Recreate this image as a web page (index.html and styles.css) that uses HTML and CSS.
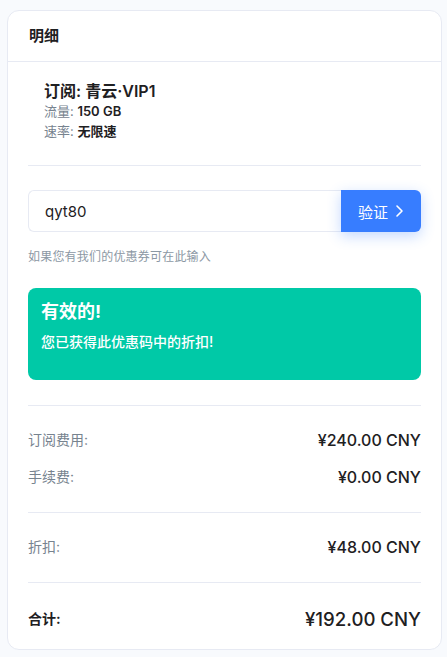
FILE: index.html
```html
<!DOCTYPE html>
<html lang="zh-CN">

<head>
    <meta charset="UTF-8">
    <meta name="viewport" content="width=device-width, initial-scale=1.0">
    <title>明细</title>
    <link rel="stylesheet" href="styles.css">
</head>

<body>

<div class="card">
    <div class="card-header">
        <h4>明细</h4>
    </div>

    <div class="card-body">
        <div class="plan">
            <h5>订阅: 青云·VIP1</h5>
            <div class="plan-line"><span class="muted">流量:</span> <b>150 GB</b></div>
            <div class="plan-line"><span class="muted">速率:</span> <b>无限速</b></div>
        </div>

        <div class="coupon">
            <div class="input-group">
                <input type="text" id="coupon" value="qyt80">
                <button type="button">验证
                    <svg width="10" height="14" viewBox="0 0 10 14"><path d="M3 2l5 5-5 5" fill="none" stroke="#fff" stroke-width="1.6" stroke-linecap="round" stroke-linejoin="round"/></svg>
                </button>
            </div>
            <p class="hint">如果您有我们的优惠券可在此输入</p>

            <div class="alert">
                <h4>有效的!</h4>
                <p>您已获得此优惠码中的折扣!</p>
            </div>
        </div>

        <div class="rows">
            <div class="row"><span class="muted">订阅费用:</span><span class="amount">¥240.00 CNY</span></div>
            <div class="row"><span class="muted">手续费:</span><span class="amount">¥0.00 CNY</span></div>
        </div>

        <div class="rows">
            <div class="row"><span class="muted">折扣:</span><span class="amount">¥48.00 CNY</span></div>
        </div>

        <div class="rows total">
            <div class="row"><span class="total-label">合计:</span><span class="total-amount">¥192.00 CNY</span></div>
        </div>
    </div>
</div>

</body>
</html>
```

FILE: styles.css
```css
body {
    font-family: Inter, "Noto Sans CJK SC", sans-serif;
    margin: 0;
    padding: 10px 5px 0 7px;
    background-color: #f8fafd;
    color: #1e2022;
}

.card {
    background-color: #fff;
    border: 1px solid #e7eaf3;
    border-radius: 12px;
    box-sizing: border-box;
    width: 435px;
}

.card-header {
    height: 51px;
    display: flex;
    align-items: center;
    padding: 0 21px 3px;
    box-sizing: border-box;
    border-bottom: 1px solid #e7eaf3;
}

.card-header h4 {
    margin: 0;
    font-size: 15px;
    font-weight: 700;
}

.card-body {
    padding: 0 20px;
}

.plan {
    padding: 19px 16px 24px;
    border-bottom: 1px solid #e7eaf3;
}

.plan h5 {
    margin: 0;
    font-size: 16px;
    font-weight: 600;
    line-height: 20px;
}

.plan-line {
    font-size: 13px;
    line-height: 20px;
}

.plan-line b {
    font-weight: 600;
}

.muted {
    color: #77838f;
}

.coupon {
    padding: 24px 0 25px;
    border-bottom: 1px solid #e7eaf3;
}

.input-group {
    display: flex;
    height: 42px;
}

.input-group input {
    flex: 1;
    min-width: 0;
    border: 1px solid #e7eaf3;
    border-right: none;
    border-radius: 6px 0 0 6px;
    padding: 0 16px;
    font-family: inherit;
    font-size: 15px;
    color: #1e2022;
    outline: none;
}

.input-group button {
    width: 80px;
    border: none;
    border-radius: 0 6px 6px 0;
    background-color: #377dff;
    color: #fff;
    font-family: inherit;
    font-size: 15px;
    display: flex;
    align-items: center;
    justify-content: center;
    gap: 6px;
    box-shadow: 0 4px 14px rgba(55, 125, 255, 0.3);
    cursor: pointer;
}

.hint {
    margin: 16px 0 0;
    font-size: 12px;
    letter-spacing: 0.2px;
    line-height: 18px;
    color: #8c98a4;
}

.alert {
    margin-top: 22px;
    background-color: #00c9a7;
    border-radius: 8px;
    color: #fff;
    padding: 10px 13px 28px;
}

.alert h4 {
    margin: 0;
    font-size: 18px;
    font-weight: 700;
    line-height: 28px;
}

.alert p {
    margin: 6px 0 0;
    font-size: 14px;
    font-weight: 500;
    line-height: 20px;
}

.rows {
    padding: 22px 0 23px;
    border-bottom: 1px solid #e7eaf3;
    display: flex;
    flex-direction: column;
    gap: 13px;
}

.rows.total {
    border-bottom: none;
    padding-top: 24px;
    padding-bottom: 18px;
}

.row {
    display: flex;
    justify-content: space-between;
    align-items: center;
    line-height: 24px;
    font-size: 14px;
}

.amount {
    font-size: 16px;
    font-weight: 500;
}

.total-label {
    font-weight: 700;
}

.total-amount {
    font-size: 18.6px;
    font-weight: 500;
}
```
